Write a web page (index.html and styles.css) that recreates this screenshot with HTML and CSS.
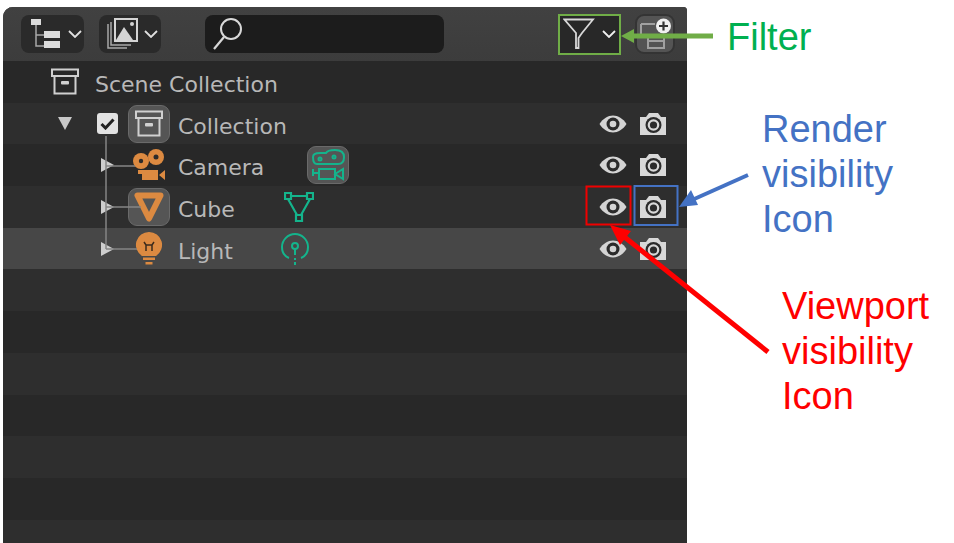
FILE: index.html
```html
<!DOCTYPE html>
<html lang="en">
<head>
    <meta charset="UTF-8">
    <title>Outliner</title>
    <link rel="stylesheet" href="styles.css">
</head>
<body>
    <svg class="defs" width="0" height="0">
        <symbol id="collection" viewBox="0 0 28 27">
            <path d="M1 1.500H27V8H1ZM3.500 8V25.500H24.500V8" fill="none" stroke="currentColor" stroke-width="2"/>
            <rect x="10" y="13" width="8" height="3.500" rx="1" fill="currentColor"/>
        </symbol>
        <symbol id="eye" viewBox="0 0 28 20">
            <path d="M0.500 10C4 4.500 9 1.500 14 1.500S24 4.500 27.500 10C24 15.500 19 18.500 14 18.500S4 15.500 0.500 10Z" fill="#d4d4d4"/>
            <circle cx="14" cy="10" r="6.500" fill="#2b2b2b"/>
            <circle cx="14" cy="10" r="3.300" fill="#d4d4d4"/>
        </symbol>
        <symbol id="render" viewBox="0 0 28 24">
            <path d="M1 5H7L10 1H19L22 5H27V23H1Z" fill="#d8d8d8"/>
            <circle cx="14.500" cy="13" r="8" fill="#2b2b2b"/>
            <circle cx="14.500" cy="13" r="5.800" fill="#d8d8d8"/>
            <circle cx="14.500" cy="13" r="3.600" fill="#2b2b2b"/>
        </symbol>
        <symbol id="twisty" viewBox="0 0 13 14">
            <path d="M0 0L13 7L0 14Z" fill="#cfcfcf"/>
        </symbol>
    </svg>

    <div class="panel">
        <div class="header">
            <div class="btn btn-mode">
                <svg width="36" height="32" viewBox="0 0 36 32">
                    <path d="M3 1H13V7H3Z" fill="#dcdcdc"/>
                    <path d="M8 7V28H16M8 17H16" fill="none" stroke="#a8a8a8" stroke-width="1.500"/>
                    <path d="M16 13H32V20H16ZM16 23H32V30H16Z" fill="#dcdcdc"/>
                </svg>
                <svg class="chev" width="14" height="8" viewBox="0 0 14 8"><path d="M1 1L7 7L13 1" fill="none" stroke="#e0e0e0" stroke-width="1.800"/></svg>
            </div>
            <div class="btn btn-display">
                <svg width="32" height="32" viewBox="0 0 32 32">
                    <path d="M1 6V30H20M4 4V27H24" fill="none" stroke="#a8a8a8" stroke-width="1.500"/>
                    <rect x="8" y="1" width="22" height="22" fill="#2a2a2a" stroke="#d4d4d4" stroke-width="2"/>
                    <path d="M9 22L17 9L26 22Z" fill="#d4d4d4"/>
                    <circle cx="25" cy="6" r="2" fill="#d4d4d4"/>
                </svg>
                <svg class="chev" width="14" height="8" viewBox="0 0 14 8"><path d="M1 1L7 7L13 1" fill="none" stroke="#e0e0e0" stroke-width="1.800"/></svg>
            </div>
            <div class="search">
                <svg width="32" height="34" viewBox="0 0 32 34">
                    <circle cx="18" cy="12" r="10" fill="none" stroke="#d8d8d8" stroke-width="2"/>
                    <path d="M11 20L1 32" fill="none" stroke="#d8d8d8" stroke-width="2.200"/>
                </svg>
            </div>
            <div class="btn btn-filter">
                <svg width="32" height="32" viewBox="0 0 32 32">
                    <path d="M1.500 1.500H30L19 15L15.500 20V30H13V15Z" fill="none" stroke="#d8d8d8" stroke-width="1.800"/>
                </svg>
                <svg class="chev" width="14" height="8" viewBox="0 0 14 8"><path d="M1 1L7 7L13 1" fill="none" stroke="#f0f0f0" stroke-width="1.800"/></svg>
            </div>
            <div class="btn btn-add">
                <svg width="32" height="32" viewBox="0 0 32 32">
                    <path d="M2 6H16M2 6V17H9M9 17H25V30H9ZM9 23H25" fill="none" stroke="#a0a0a0" stroke-width="2"/>
                    <circle cx="24.500" cy="8" r="7.500" fill="#f0f0f0"/>
                    <path d="M24.500 3.500V12.500M20 8H29" stroke="#333" stroke-width="2.200"/>
                </svg>
            </div>
        </div>

        <div class="rows">
            <div class="row row-scene">
                <svg class="icon-coll"><use href="#collection"/></svg>
                <span class="label label-scene">Scene Collection</span>
            </div>
            <div class="row row-coll">
                <svg class="tw-down" viewBox="0 0 14 13"><path d="M0 0H14L7 13Z" fill="#c8c8c8"/></svg>
                <span class="check">
                    <svg width="15" height="12" viewBox="0 0 15 12"><path d="M1.500 6L5.500 10L13.500 1.500" fill="none" stroke="#222" stroke-width="3"/></svg>
                </span>
                <span class="icon-box"><svg class="icon-coll"><use href="#collection"/></svg></span>
                <span class="label">Collection</span>
                <div class="vis">
                    <svg class="eye"><use href="#eye"/></svg>
                    <svg class="cam"><use href="#render"/></svg>
                </div>
            </div>
            <div class="row row-child">
                <svg class="tw"><use href="#twisty"/></svg>
                <span class="icon-slot">
                    <svg width="33" height="32" viewBox="0 0 33 32">
                        <circle cx="8" cy="12" r="8" fill="#dc8a41"/>
                        <circle cx="8" cy="12" r="2.200" fill="#2b2b2b"/>
                        <circle cx="23" cy="8" r="8" fill="#dc8a41"/>
                        <circle cx="23" cy="8" r="2.500" fill="#2b2b2b"/>
                        <path d="M5 21H25V31H9V25H5ZM26 26L32 21V31Z" fill="#dc8a41"/>
                    </svg>
                </span>
                <span class="label">Camera</span>
                <span class="icon-box data-cam">
                    <svg width="34" height="32" viewBox="0 0 34 32" fill="none" stroke="#14b48c" stroke-width="2">
                        <path d="M2 8C2 5 5 4 9 4H15C16 2 20 1 24 1C29 1 33 3 33 8C33 12 31 15 27 15H6C3 15 2 12 2 8Z"/>
                        <circle cx="9" cy="10" r="1.500"/>
                        <circle cx="23" cy="8" r="1.500"/>
                        <path d="M2 20V27M2 24H8M8 20H24V30H8ZM24 25L32 20V30Z"/>
                    </svg>
                </span>
                <div class="vis">
                    <svg class="eye"><use href="#eye"/></svg>
                    <svg class="cam"><use href="#render"/></svg>
                </div>
            </div>
            <div class="row row-child">
                <svg class="tw"><use href="#twisty"/></svg>
                <span class="icon-box">
                    <svg width="30" height="30" viewBox="0 0 30 30">
                        <path d="M3.500 3.500H26.500L15 26.500Z" fill="none" stroke="#dc8a41" stroke-width="6" stroke-linejoin="round"/>
                    </svg>
                </span>
                <span class="label">Cube</span>
                <svg class="data-mesh" width="30" height="30" viewBox="0 0 30 30" fill="none" stroke="#14b48c" stroke-width="2.200">
                    <path d="M1 1H7V7H1ZM23 1H29V7H23ZM12 23H18V29H12ZM7 4H23M4 7L13 23M26 7L17 23"/>
                </svg>
                <div class="vis">
                    <svg class="eye"><use href="#eye"/></svg>
                    <svg class="cam"><use href="#render"/></svg>
                </div>
            </div>
            <div class="row row-child row-active">
                <svg class="tw"><use href="#twisty"/></svg>
                <span class="icon-slot">
                    <svg width="28" height="33" viewBox="0 0 28 33">
                        <path d="M14 0A13 13 0 0 1 21 24H7A13 13 0 0 1 14 0Z" fill="#dc8a41"/>
                        <path d="M9 10L11 13H17L19 10M11 13V19M17 13V19" fill="none" stroke="#3a2a1c" stroke-width="1.500"/>
                        <path d="M8 25.500H20V28H8ZM10.500 30H17.500V32.500H10.500Z" fill="#dc8a41"/>
                    </svg>
                </span>
                <span class="label">Light</span>
                <svg class="data-light" width="28" height="32" viewBox="0 0 28 32" fill="none" stroke="#14b48c" stroke-width="2">
                    <path d="M8 25C3 23 1 18 1 14C1 7 7 1 14 1S27 7 27 14C27 18 25 23 20 25"/>
                    <circle cx="14" cy="13" r="3"/>
                    <path d="M14 16V22M14 25V27M14 29V32"/>
                </svg>
                <div class="vis">
                    <svg class="eye"><use href="#eye"/></svg>
                    <svg class="cam"><use href="#render"/></svg>
                </div>
            </div>
            <div class="row"></div>
            <div class="row"></div>
            <div class="row"></div>
            <div class="row"></div>
            <div class="row"></div>
            <div class="row"></div>
            <div class="row"></div>
        </div>

        <!-- tree lines sit over the rows -->
        <svg class="tree" width="40" height="120" viewBox="0 0 40 120">
            <path d="M1 0V113M1 30H30M1 71H36M1 113H32" fill="none" stroke="#858585" stroke-width="1.500"/>
        </svg>
    </div>

    <!-- callouts drawn on top of the screenshot -->
    <svg class="marks" width="954" height="543" viewBox="0 0 954 543">
        <rect x="559" y="15" width="61" height="39" fill="none" stroke="#70ad47" stroke-width="2"/>
        <rect x="586.500" y="186.500" width="44" height="38" fill="none" stroke="#f00000" stroke-width="2"/>
        <rect x="634.500" y="186" width="43" height="39" fill="none" stroke="#4472c4" stroke-width="2"/>
        <path d="M713 36H630" stroke="#70ad47" stroke-width="5"/>
        <path d="M621 36L634 29V43Z" fill="#70ad47"/>
        <path d="M748 175L692 200" stroke="#4472c4" stroke-width="4"/>
        <path d="M679 207L691 190L698 205Z" fill="#4472c4"/>
        <path d="M768 352L622 235" stroke="#ff0000" stroke-width="5"/>
        <path d="M610 225L631 231L620 245Z" fill="#ff0000"/>
    </svg>

    <div class="note note-filter">Filter</div>
    <div class="note note-render">Render<br>visibility<br>Icon</div>
    <div class="note note-view">Viewport<br>visibility<br>Icon</div>
</body>
</html>
```

FILE: styles.css
```css
html, body {
    margin: 0;
    height: 543px;
    overflow: hidden;
    background-color: #fff;
}

body {
    padding: 7px 0 0 3px;
    box-sizing: border-box;
    font-family: "DejaVu Sans", sans-serif;
}

.defs {
    position: absolute;
}

.panel {
    position: relative;
    width: 684px;
    height: 536px;
    overflow: hidden;
    background-color: #2b2b2b;
    border-radius: 10px 4px 0 0;
    box-shadow: inset 1px 0 0 #555, inset -1px 0 0 #555;
}

/* header */
.header {
    display: flex;
    align-items: center;
    height: 54px;
    padding: 0 12px 0 18px;
    box-sizing: border-box;
    background: linear-gradient(#414141, #3c3c3c);
}

.btn {
    display: flex;
    align-items: center;
    height: 38px;
    background-color: #2a2a2a;
    border-radius: 8px;
}

.btn-mode {
    width: 63px;
    padding-left: 7px;
    box-sizing: border-box;
    gap: 4px;
}

.btn-display {
    width: 62px;
    margin-left: 15px;
    padding-left: 8px;
    box-sizing: border-box;
    gap: 5px;
}

.search {
    display: flex;
    align-items: center;
    width: 239px;
    height: 38px;
    margin-left: 44px;
    padding-left: 8px;
    box-sizing: border-box;
    background-color: #1c1c1c;
    border-radius: 8px;
}

.btn-filter {
    width: 62px;
    height: 40px;
    margin-left: 114px;
    padding-left: 5px;
    box-sizing: border-box;
    gap: 7px;
    background-color: #282828;
    border-radius: 0;
}

.btn-add {
    justify-content: center;
    width: 40px;
    height: 40px;
    margin-left: 15px;
    box-sizing: border-box;
    background-color: #545454;
    border: 2px solid #343434;
    border-radius: 9px;
}

/* rows */
.row {
    display: flex;
    align-items: center;
    height: 41.7px;
    padding-right: 20px;
    box-sizing: border-box;
}

.row:nth-child(odd) {
    background-color: #282828;
}

.row:nth-child(even) {
    background-color: #2e2e2e;
}

.row.row-active {
    background-color: #474747;
}

.row-scene {
    padding-left: 48px;
}

.row-coll {
    padding-left: 55px;
}

.row-child {
    padding-left: 98px;
}

.label {
    margin-left: 8px;
    padding-top: 5px;
    font-size: 22px;
    color: #b8b8b8;
    white-space: nowrap;
}

.label-scene {
    margin-left: 16px;
}

.icon-coll {
    width: 28px;
    height: 27px;
    color: #d0d0d0;
}

.tw-down {
    width: 14px;
    height: 13px;
    margin-right: 25px;
}

.tw {
    width: 13px;
    height: 14px;
    margin-right: 14px;
}

.check {
    display: flex;
    align-items: center;
    justify-content: center;
    width: 21px;
    height: 21px;
    margin-right: 10px;
    background-color: #e2e2e2;
    border-radius: 3px;
}

.icon-box {
    display: flex;
    align-items: center;
    justify-content: center;
    width: 42px;
    height: 38px;
    box-sizing: border-box;
    background-color: #555;
    border: 1px solid #6a6a6a;
    border-radius: 9px;
}

.icon-slot {
    display: flex;
    align-items: center;
    justify-content: center;
    width: 42px;
    height: 34px;
}

.data-cam {
    margin-left: 43px;
}

.data-mesh {
    margin-left: 49px;
}

.data-light {
    margin-left: 48px;
}

.vis {
    display: flex;
    align-items: center;
    gap: 12px;
    margin-left: auto;
}

.eye {
    width: 28px;
    height: 20px;
}

.cam {
    width: 28px;
    height: 24px;
}

.tree {
    position: absolute;
    left: 102px;
    top: 129px;
}

/* callouts */
.marks {
    position: absolute;
    left: 0;
    top: 0;
}

.note {
    position: absolute;
    font-family: "Liberation Sans", Arial, sans-serif;
    font-size: 38px;
    line-height: 45px;
    white-space: nowrap;
}

.note-filter {
    left: 727px;
    top: 15px;
    color: #00b050;
}

.note-render {
    left: 762px;
    top: 107px;
    color: #4472c4;
}

.note-view {
    left: 782px;
    top: 284px;
    color: #ff0000;
}
```
